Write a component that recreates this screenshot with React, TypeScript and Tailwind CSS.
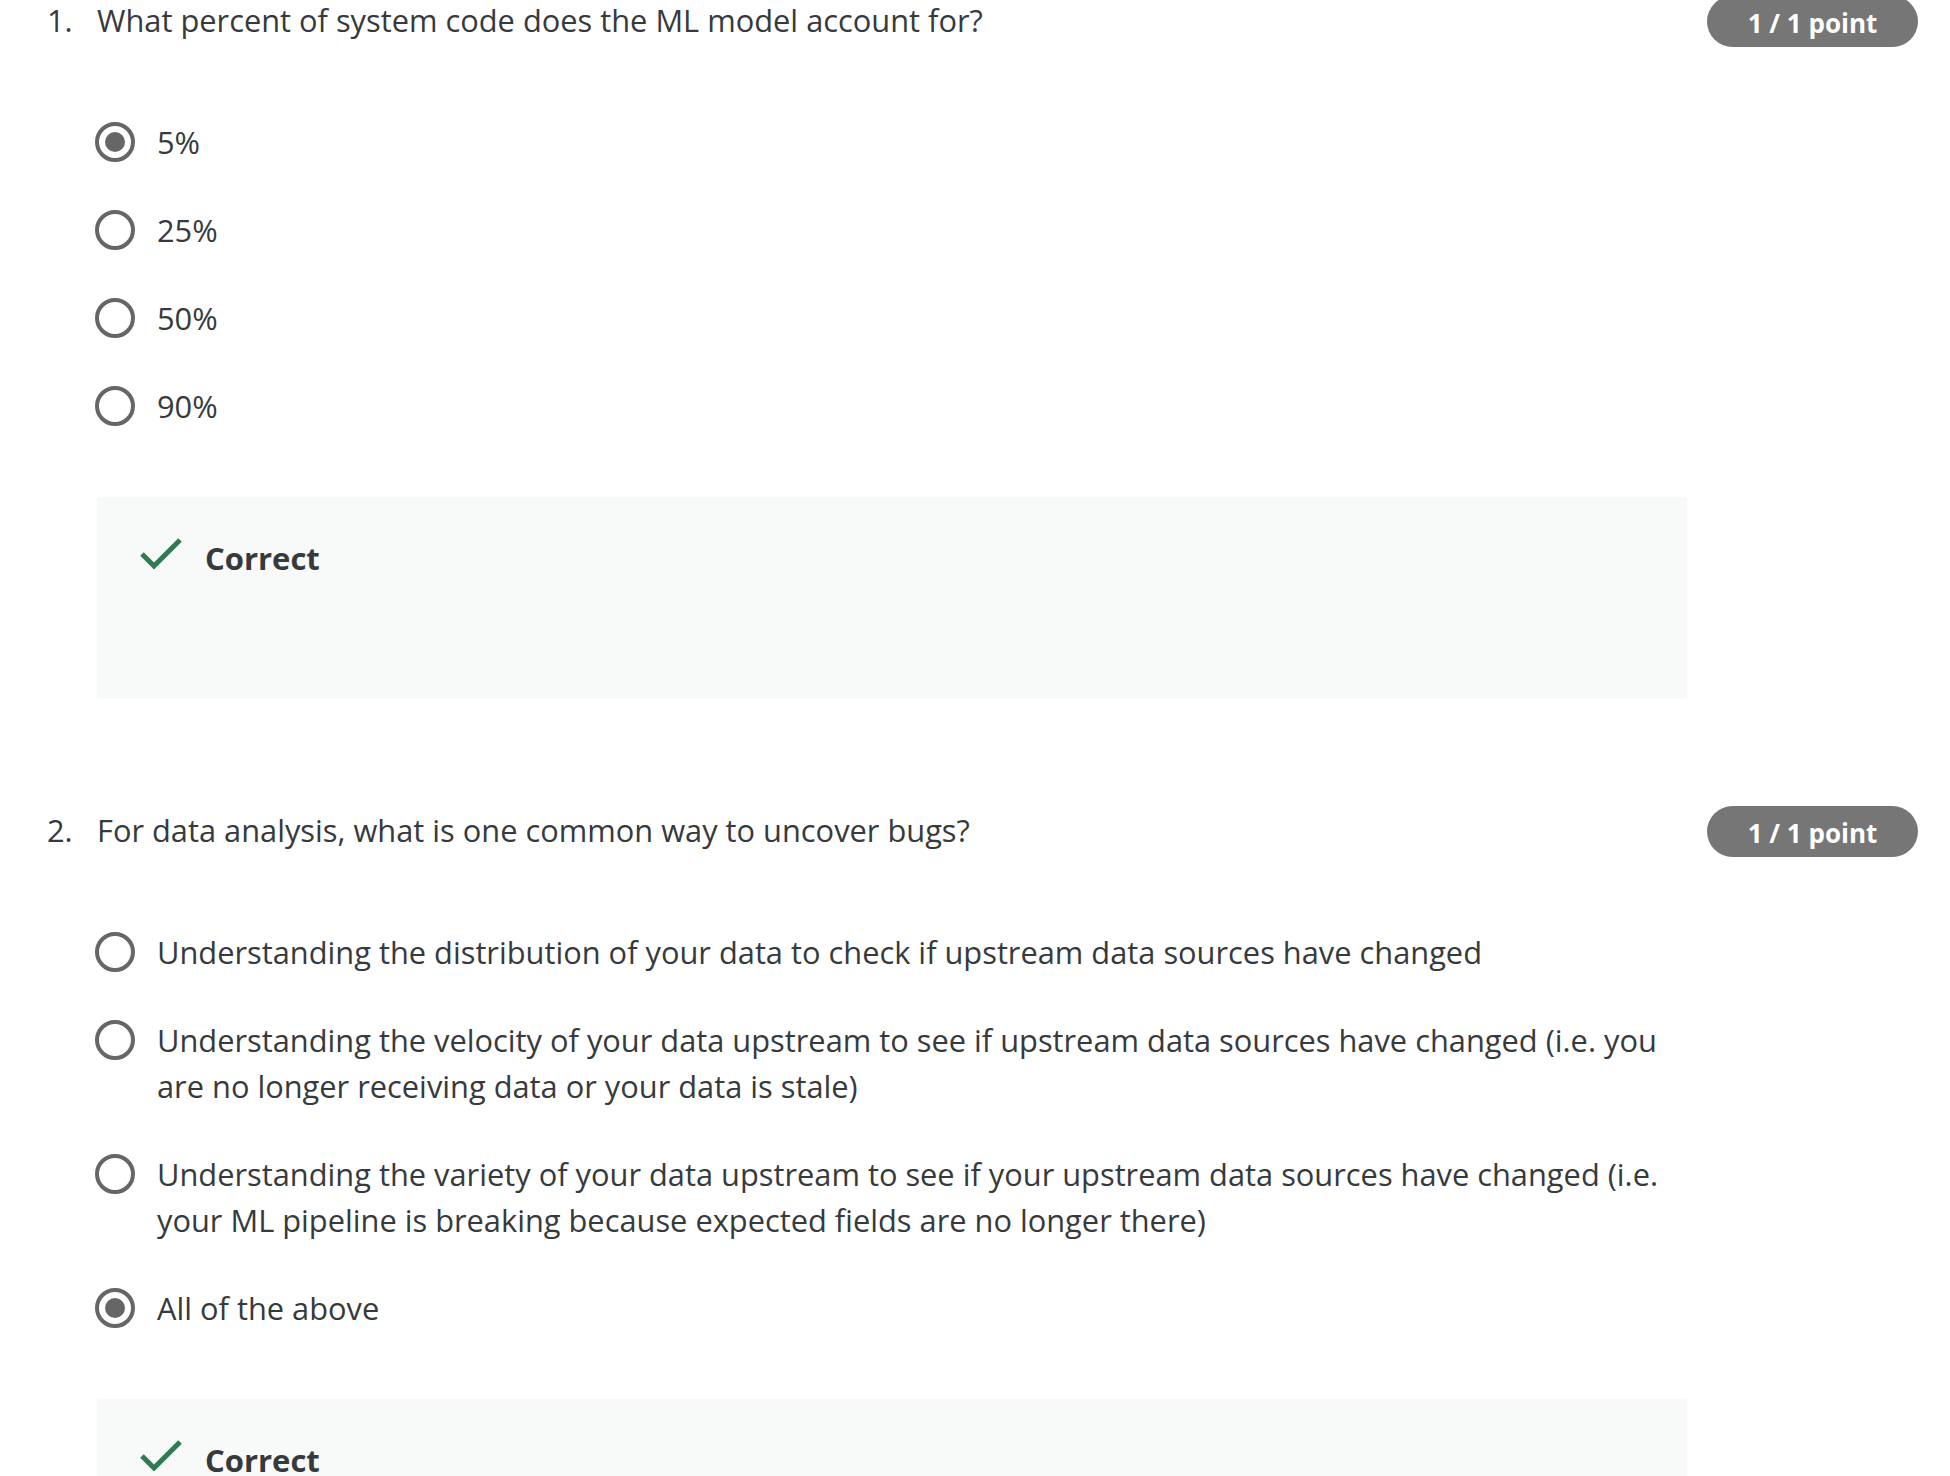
import React from 'react';

type Option = { text: string; selected?: boolean };
type Question = { n: number; prompt: string; options: Option[] };

const questions: Question[] = [
  {
    n: 1,
    prompt: 'What percent of system code does the ML model account for?',
    options: [{ text: '5%', selected: true }, { text: '25%' }, { text: '50%' }, { text: '90%' }],
  },
  {
    n: 2,
    prompt: 'For data analysis, what is one common way to uncover bugs?',
    options: [
      { text: 'Understanding the distribution of your data to check if upstream data sources have changed' },
      {
        text: 'Understanding the velocity of your data upstream to see if upstream data sources have changed (i.e. you are no longer receiving data or your data is stale)',
      },
      {
        text: 'Understanding the variety of your data upstream to see if your upstream data sources have changed (i.e. your ML pipeline is breaking because expected fields are no longer there)',
      },
      { text: 'All of the above', selected: true },
    ],
  },
];

const Radio = ({ on }: { on?: boolean }) => (
  <span className="mt-[3px] flex h-[40px] w-[40px] shrink-0 items-center justify-center rounded-full border-[4px] border-[#666666]">
    {on && <span className="h-[20px] w-[20px] rounded-full bg-[#666666]" />}
  </span>
);

const Check = () => (
  <svg width="42" height="32" viewBox="0 0 42 32" className="shrink-0">
    <path d="M2 17 L14 29 L40 3" fill="none" stroke="#2f7a50" strokeWidth="5" />
  </svg>
);

const QuestionBlock = ({ q }: { q: Question }) => (
  <div className="flex flex-col">
    <div className="flex h-[51px] items-center">
      <span className="w-[50px] shrink-0 pb-[4px] text-[30.8px] leading-[46px]">{q.n}.</span>
      <span className="w-[1590px] shrink-0 pb-[4px] text-[30.8px] leading-[46px]">{q.prompt}</span>
      <span className="ml-[20px] flex h-[51px] w-[211px] shrink-0 items-center justify-center rounded-full bg-[#767676] pt-[4px] text-[26px] font-bold text-white">
        1 / 1 point
      </span>
    </div>

    <div className="ml-[48px] mt-[72px] flex w-[1592px] flex-col gap-[42px]">
      {q.options.map((o, i) => (
        <label key={i} className="flex items-start gap-[22px]">
          <Radio on={o.selected} />
          <span className="text-[30.8px] leading-[46px]">{o.text}</span>
        </label>
      ))}
    </div>

    <div className="ml-[50px] mt-[68px] h-[202px] w-[1590px] bg-[#f8f9f9] pl-[43px] pt-[40px]">
      <div className="flex items-start gap-[23px]">
        <Check />
        <span className="-mt-[3px] text-[31px] font-bold leading-[48px]">Correct</span>
      </div>
    </div>
  </div>
);

const App: React.FC = () => {
  return (
    <div
      className="min-h-screen overflow-hidden bg-white text-[#373a3c]"
      style={{ fontFamily: '"Open Sans", "Noto Sans", sans-serif' }}
    >
      <div className="-mt-[4px] flex flex-col gap-[107px] pl-[47px]">
        {questions.map((q) => (
          <QuestionBlock key={q.n} q={q} />
        ))}
      </div>
    </div>
  );
};

export default App;
